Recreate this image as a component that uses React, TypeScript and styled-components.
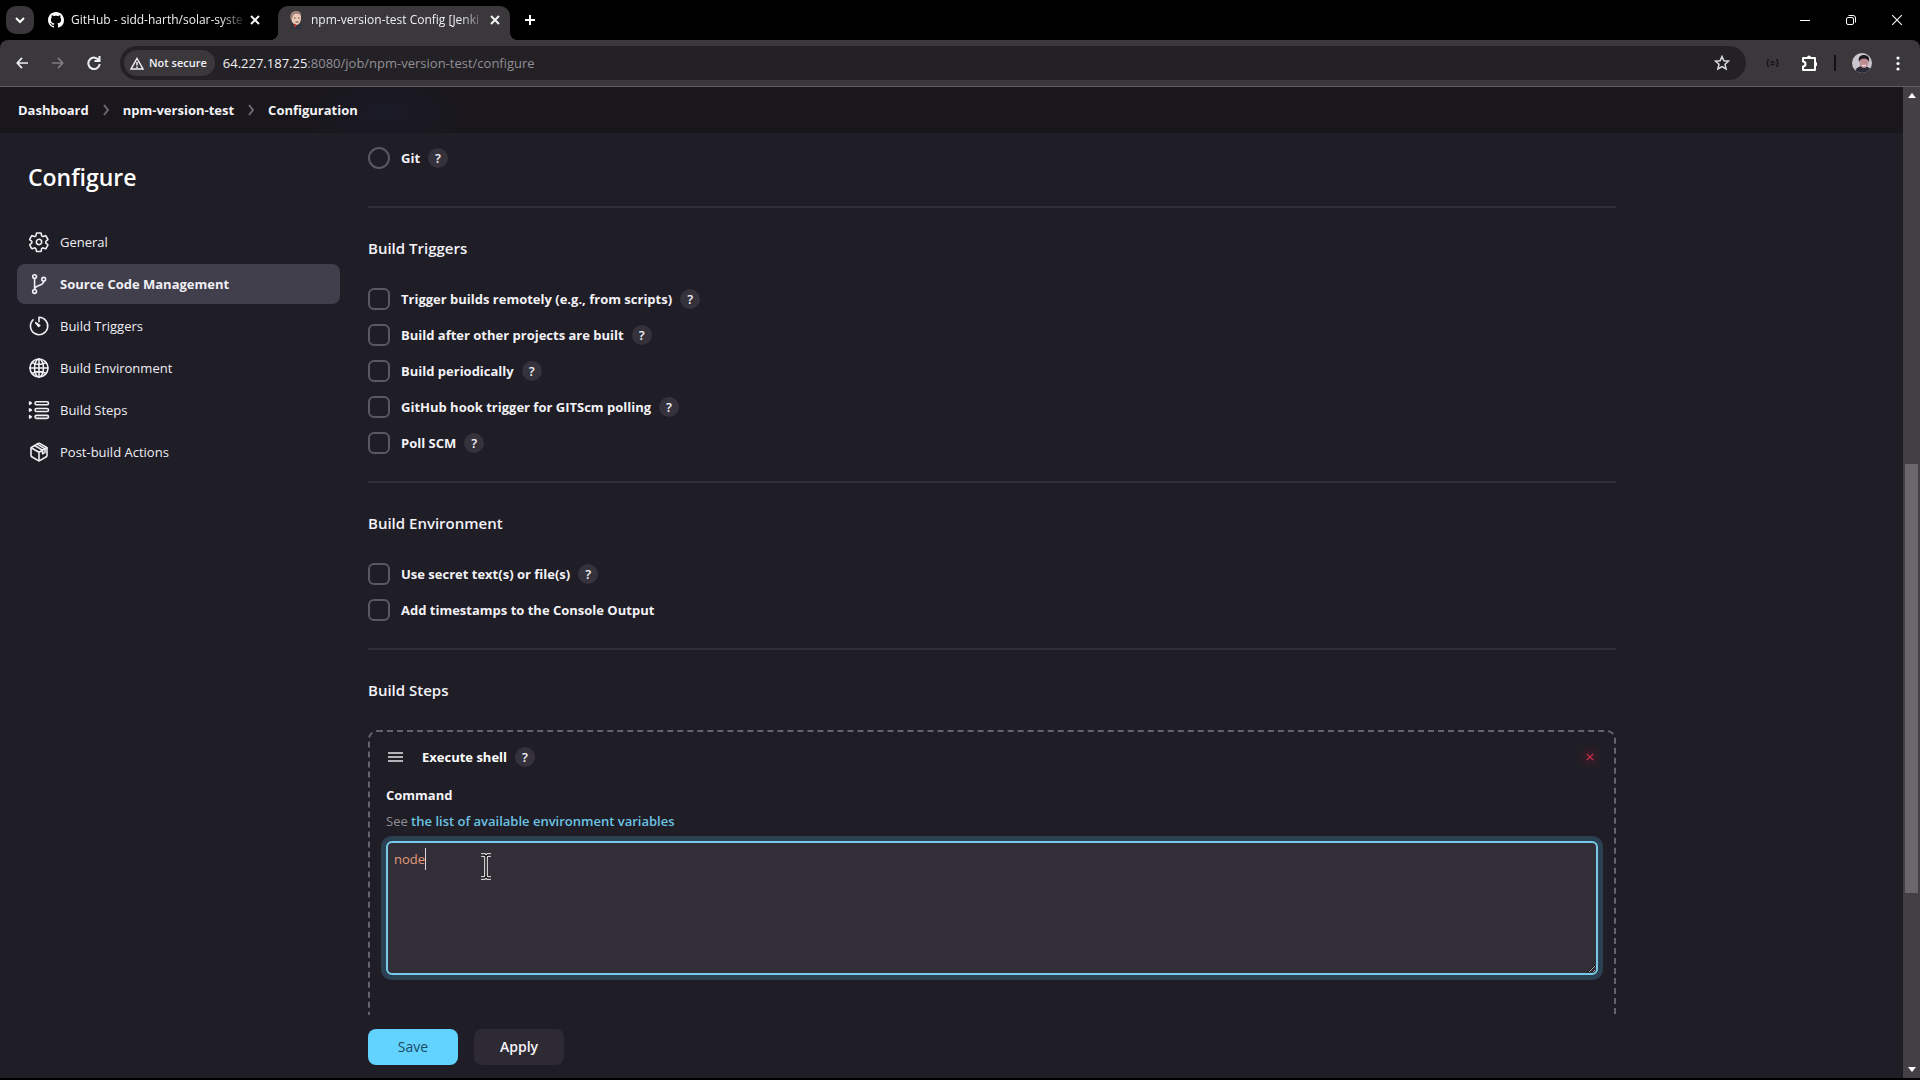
import React from "react";
import styled, { createGlobalStyle, css } from "styled-components";

const Global = createGlobalStyle`
  *, *::before, *::after { box-sizing: border-box; }
  body { margin: 0; background: #000; overflow: hidden; }
  button { border: 0; padding: 0; margin: 0; background: none; color: inherit; font: inherit; cursor: pointer; }
  svg { display: block; flex: none; }
`;

const Window = styled.div`
  height: 100vh;
  display: flex;
  flex-direction: column;
  background: #000;
  padding-bottom: 2px;
  color: #f3f2f7;
  font-family: "Open Sans", "Noto Sans", sans-serif;
  font-size: 13px;
  line-height: 20px;
`;

/* ---------- Browser chrome ---------- */
const TabStrip = styled.div`
  display: flex;
  align-items: stretch;
  height: 40px;
  flex: none;
  padding: 6px 0 0 6px;
`;
const TabSearch = styled.button`
  width: 28px;
  height: 28px;
  border-radius: 10px;
  background: #39373a;
  display: grid;
  place-items: center;
`;
const Tab = styled.div<{ $active?: boolean }>`
  position: relative;
  width: 232px;
  display: flex;
  align-items: center;
  padding: 0 7px 6px 10px;
  margin-left: ${(p) => (p.$active ? 8 : 4)}px;
  border-radius: 10px 10px 0 0;
  background: ${(p) => (p.$active ? "#3a383b" : "transparent")};
  ${(p) =>
    p.$active &&
    css`
      &::before,
      &::after {
        content: "";
        position: absolute;
        bottom: 0;
        width: 8px;
        height: 8px;
      }
      &::before { left: -8px; background: radial-gradient(circle at 0 0, #000 8px, #3a383b 8px); }
      &::after { right: -8px; background: radial-gradient(circle at 100% 0, #000 8px, #3a383b 8px); }
    `}
`;
const TabTitle = styled.span`
  flex: 1;
  min-width: 0;
  margin-left: 7px;
  white-space: nowrap;
  font-size: 12px;
  line-height: 18px;
  color: #f0eff2;
  mask-image: linear-gradient(to right, #000 85%, transparent);
`;
const Glyph = styled.button`
  width: 16px;
  height: 16px;
  flex: none;
  display: grid;
  place-items: center;
  color: #f2f2f2;
`;
const NewTab = styled(Glyph)`
  height: 28px;
  margin-left: 12px;
`;
const WindowButtons = styled.div`
  margin-left: auto;
  display: flex;
  height: 28px;
`;
const WinButton = styled.button`
  width: 46px;
  display: grid;
  place-items: center;
`;
const Toolbar = styled.div`
  flex: none;
  height: 47px;
  display: flex;
  align-items: center;
  background: #3a383b;
  border-bottom: 1px solid #605e61;
  border-radius: 8px 8px 0 0;
  padding: 0 5px 0 4px;
`;
const NavButton = styled.button<{ $dim?: boolean }>`
  width: 36px;
  height: 36px;
  display: grid;
  place-items: center;
  color: ${(p) => (p.$dim ? "#7d7b7f" : "#efeef0")};
`;
const Omnibox = styled.div`
  flex: 1;
  height: 34px;
  margin-left: 8px;
  padding: 0 16px 0 4px;
  display: flex;
  align-items: center;
  border-radius: 17px;
  background: #232126;
`;
const Chip = styled.button`
  height: 26px;
  padding: 0 8px 0 6px;
  display: flex;
  align-items: center;
  gap: 5px;
  border-radius: 13px;
  background: #3a383b;
  font-size: 11px;
  line-height: 18px;
  font-weight: 600;
  white-space: nowrap;
`;
const Url = styled.span`
  flex: 1;
  margin-left: 8px;
  color: #918f94;
  & b { font-weight: 400; color: #f2f1f4; }
`;
const Extensions = styled.div`
  display: flex;
  align-items: center;
  padding-left: 14px;
`;
const ExtButton = styled.button<{ $w: number }>`
  width: ${(p) => p.$w}px;
  height: 28px;
  display: grid;
  place-items: center;
`;
const Rule = styled.span`
  width: 2px;
  height: 16px;
  margin-right: 7px;
  background: #111;
`;

/* ---------- Page ---------- */
const Viewport = styled.div`
  flex: 1;
  min-height: 0;
  display: flex;
`;
const Page = styled.div`
  flex: 1;
  min-width: 0;
  display: flex;
  flex-direction: column;
  background: #1f1d25;
`;
const Scrollbar = styled.div`
  width: 17px;
  flex: none;
  display: flex;
  flex-direction: column;
  align-items: center;
  justify-content: space-between;
  padding: 6px 0;
  background: #424042;
`;
const Thumb = styled.div`
  width: 13px;
  flex: 430;
  background: #696769;
`;
const Gap = styled.div<{ $grow: number }>`
  flex: ${(p) => p.$grow};
`;
const Crumbs = styled.nav`
  flex: none;
  height: 46px;
  display: flex;
  align-items: center;
  gap: 14px;
  padding: 0 18px;
  background: radial-gradient(ellipse 80px 40px at 385px 26px, #1a1a27, #19171c);
  font-weight: 700;
  & a { color: #f3f2f7; text-decoration: none; }
`;
const Columns = styled.div`
  flex: 1;
  min-height: 0;
  display: flex;
  overflow: hidden;
`;
const Side = styled.aside`
  width: 340px;
  flex: none;
  padding: 26px 0 0 17px;
`;
const Title = styled.h1`
  margin: 0 0 27px;
  padding-left: 11px;
  font-size: 23px;
  line-height: 36px;
  font-weight: 600;
  color: #fff;
`;
const Tasks = styled.nav`
  display: flex;
  flex-direction: column;
  gap: 2px;
`;
const Task = styled.a<{ $active?: boolean }>`
  height: 40px;
  display: flex;
  align-items: center;
  gap: 11px;
  padding-left: 12px;
  border-radius: 8px;
  color: #f0eff5;
  text-decoration: none;
  font-weight: ${(p) => (p.$active ? 700 : 400)};
  background: ${(p) => (p.$active ? "#423f4c" : "transparent")};
`;
const Main = styled.main`
  flex: 1;
  min-width: 0;
  display: flex;
  flex-direction: column;
  margin-left: 28px;
  margin-right: 287px;
`;
const Form = styled.form`
  flex: 1;
  min-height: 0;
  overflow: hidden;
  padding-top: 14px;
`;
const Section = styled.section`
  padding-bottom: 27px;
  margin-bottom: 28px;
  border-bottom: 2px solid #322f3a;
`;
const ScmSection = styled(Section)`
  padding-bottom: 37px;
`;
const Heading = styled.h2`
  margin: 0 0 28px;
  font-size: 15px;
  line-height: 24px;
  font-weight: 600;
`;
const Options = styled.div`
  display: flex;
  flex-direction: column;
  gap: 14px;
`;
const Option = styled.div`
  display: flex;
  align-items: center;
  height: 22px;
`;
const Check = styled.input`
  appearance: none;
  flex: none;
  width: 22px;
  height: 22px;
  margin: 0;
  border: 2px solid #5b5862;
  border-radius: ${(p) => (p.type === "radio" ? "50%" : "6px")};
  background: #1f1d25;
`;
const OptionLabel = styled.label`
  padding: 0 8px 0 11px;
  font-weight: 700;
`;
const Help = styled.button`
  width: 20px;
  height: 20px;
  border-radius: 50%;
  background: #35323c;
  line-height: 20px;
  font-weight: 600;
  text-align: center;
`;
const Step = styled.div`
  height: 340px;
  padding: 14px 16px;
  border: 2px dashed #66636c;
  border-radius: 9px;
`;
const StepHead = styled.div`
  display: flex;
  align-items: center;
  height: 22px;
  padding: 0 0 0 2px;
`;
const StepName = styled.span`
  padding: 0 8px 0 19px;
  font-weight: 700;
  color: #fff;
`;
const Remove = styled.button`
  width: 24px;
  height: 24px;
  margin-left: auto;
  margin-right: -4px;
  display: grid;
  place-items: center;
  border-radius: 8px;
  color: #d6304c;
  background: radial-gradient(circle, #3a1c28, #1f1d25 75%);
`;
const FieldLabel = styled.label`
  display: block;
  margin-top: 16px;
  line-height: 22px;
  font-weight: 700;
`;
const Hint = styled.p`
  margin: 5px 0 10px;
  line-height: 20px;
  color: #918f96;
  & a { color: #6cc4e4; font-weight: 600; text-decoration: none; }
`;
const Editor = styled.div`
  position: relative;
`;
const Command = styled.textarea`
  display: block;
  width: 100%;
  height: 134px;
  padding: 6px;
  border: 2px solid #78c9e8;
  border-radius: 6px;
  outline: 0;
  box-shadow: 0 0 0 5px #294150;
  background: #322e38;
  color: #e39a7c;
  font: inherit;
  line-height: 20px;
  resize: vertical;
`;
const Caret = styled.span`
  position: absolute;
  left: 39px;
  top: 7px;
  width: 1px;
  height: 22px;
  background: #d8d8dc;
`;
const Pointer = styled.svg`
  position: absolute;
  left: 94px;
  top: 12px;
`;
const Footer = styled.div`
  flex: none;
  height: 63px;
  display: flex;
  gap: 16px;
  padding-top: 14px;
`;
const Action = styled.button<{ $primary?: boolean }>`
  width: 90px;
  height: 36px;
  border-radius: 8px;
  font-size: 14px;
  font-weight: ${(p) => (p.$primary ? 400 : 600)};
  color: ${(p) => (p.$primary ? "#1d4a63" : "#f5f4f8")};
  background: ${(p) => (p.$primary ? "#62d3ff" : "#2d2a34")};
`;

const Cross = ({ size = 10, w = 2 }: { size?: number; w?: number }) => (
  <svg width={size} height={size} viewBox="0 0 10 10" stroke="currentColor" strokeWidth={w} fill="none">
    <path d="M1 1l8 8M9 1l-8 8" />
  </svg>
);
const Chevron = () => (
  <svg width="6" height="12" viewBox="0 0 6 12" fill="none" stroke="#6e6b75" strokeWidth="2">
    <path d="M1 1l4 5-4 5" />
  </svg>
);
const Line = ({ children }: { children: React.ReactNode }) => (
  <svg width="20" height="20" viewBox="16 16 480 480" overflow="visible" fill="none" stroke="currentColor" strokeWidth="38" strokeLinecap="round" strokeLinejoin="round">
    {children}
  </svg>
);

const icons = {
  gear: (
    <Line>
      <path d="M262 192a64 64 0 1 0 58 58 64 64 0 0 0-58-58zm157 64a167 167 0 0 1-2 23l49 39a12 12 0 0 1 3 15l-47 80a12 12 0 0 1-14 5l-49-20a14 14 0 0 0-13 1 185 185 0 0 1-21 12 14 14 0 0 0-8 11l-7 52a12 12 0 0 1-12 10h-94a12 12 0 0 1-11-10l-8-52a14 14 0 0 0-8-11 172 172 0 0 1-20-12 14 14 0 0 0-13-1l-50 20a12 12 0 0 1-14-6l-46-80a12 12 0 0 1 3-15l42-33a14 14 0 0 0 5-12 165 165 0 0 1 0-24 14 14 0 0 0-5-11l-42-33a12 12 0 0 1-3-15l46-80a12 12 0 0 1 14-5l50 20a14 14 0 0 0 13-1 185 185 0 0 1 20-12 14 14 0 0 0 8-11l8-52a12 12 0 0 1 11-10h94a12 12 0 0 1 11 10l8 52a14 14 0 0 0 8 11 172 172 0 0 1 20 12 14 14 0 0 0 13 1l50-20a12 12 0 0 1 14 6l46 80a12 12 0 0 1-3 15l-42 33a14 14 0 0 0-5 12c0 4 1 8 1 12z" />
    </Line>
  ),
  branch: (
    <Line>
      <circle cx="150" cy="78" r="46" />
      <circle cx="150" cy="434" r="46" />
      <circle cx="368" cy="142" r="46" />
      <path d="M150 126v260M368 190c0 128-218 76-218 196" />
    </Line>
  ),
  timer: (
    <Line>
      <path d="M113 108A208 208 0 1 0 256 48v106" />
      <path d="M176 176l72 92 26-26z" fill="currentColor" />
    </Line>
  ),
  globe: (
    <Line>
      <circle cx="256" cy="256" r="216" />
      <ellipse cx="256" cy="256" rx="108" ry="216" />
      <path d="M256 40v432M40 256h432M90 128c96 56 236 56 332 0M90 384c96-56 236-56 332 0" />
    </Line>
  ),
  steps: (
    <Line>
      <rect x="160" y="56" width="324" height="72" rx="36" />
      <rect x="160" y="220" width="324" height="72" rx="36" />
      <rect x="160" y="384" width="324" height="72" rx="36" />
      <path d="M30 64v56l44-28zM30 228v56l44-28zM30 392v56l44-28z" />
    </Line>
  ),
  box: (
    <Line>
      <path d="M448 342V170a32 32 0 0 0-16-28L272 49a32 32 0 0 0-32 0L80 142a32 32 0 0 0-16 28v172a32 32 0 0 0 16 28l160 93a32 32 0 0 0 32 0l160-93a32 32 0 0 0 16-28z" />
      <path d="M69 153l187 110 187-110M256 463V263M150 100l190 112v88l60-36v-84L212 68" />
    </Line>
  ),
};

const tasks: { icon: keyof typeof icons; label: string; active?: boolean }[] = [
  { icon: "gear", label: "General" },
  { icon: "branch", label: "Source Code Management", active: true },
  { icon: "timer", label: "Build Triggers" },
  { icon: "globe", label: "Build Environment" },
  { icon: "steps", label: "Build Steps" },
  { icon: "box", label: "Post-build Actions" },
];
const triggers = [
  "Trigger builds remotely (e.g., from scripts)",
  "Build after other projects are built",
  "Build periodically",
  "GitHub hook trigger for GITScm polling",
  "Poll SCM",
];

const HelpButton = ({ topic }: { topic: string }) => (
  <Help type="button" title={`Help for feature: ${topic}`}>?</Help>
);
const Choice = ({ id, label, type = "checkbox", help = true }: { id: string; label: string; type?: string; help?: boolean }) => (
  <Option>
    <Check type={type} id={id} />
    <OptionLabel htmlFor={id}>{label}</OptionLabel>
    {help && <HelpButton topic={label} />}
  </Option>
);

const BrowserTabs = () => (
  <TabStrip>
    <TabSearch aria-label="Search tabs">
      <svg width="10" height="8" viewBox="0 0 10 8" fill="none" stroke="#fff" strokeWidth="2"><path d="M1 2l4 4 4-4" /></svg>
    </TabSearch>
    <Tab>
      <svg width="16" height="16" viewBox="0 0 16 16" fill="#fff">
        <path d="M8 0C3.58 0 0 3.58 0 8c0 3.54 2.29 6.53 5.47 7.59.4.07.55-.17.55-.38 0-.19-.01-.82-.01-1.49-2.01.37-2.53-.49-2.69-.94-.09-.23-.48-.94-.82-1.13-.28-.15-.68-.52-.01-.53.63-.01 1.08.58 1.23.82.72 1.21 1.87.87 2.33.66.07-.52.28-.87.51-1.07-1.78-.2-3.64-.89-3.64-3.95 0-.87.31-1.59.82-2.15-.08-.2-.36-1.02.08-2.12 0 0 .67-.21 2.2.82.64-.18 1.32-.27 2-.27s1.36.09 2 .27c1.53-1.04 2.2-.82 2.2-.82.44 1.1.16 1.92.08 2.12.51.56.82 1.27.82 2.15 0 3.07-1.87 3.75-3.65 3.95.29.25.54.73.54 1.48 0 1.07-.01 1.93-.01 2.2 0 .21.15.46.55.38A8.01 8.01 0 0 0 16 8c0-4.42-3.58-8-8-8z" />
      </svg>
      <TabTitle>GitHub - sidd-harth/solar-syste</TabTitle>
      <Glyph aria-label="Close tab"><Cross /></Glyph>
    </Tab>
    <Tab $active>
      <svg width="16" height="18" viewBox="0 0 16 18">
        <path d="M3 13l5-1 5 2 1 4H3z" fill="#2c3440" />
        <path d="M3 6c0-4 2-5.500 5-5.500S13 2 13 6.500 11 14 8.500 14 3 11 3 6z" fill="#eccbb8" />
        <path d="M2.500 8C1.500 3 4 0 8 0s5.500 2 5 5C11 2.500 7 2 5.500 4S4 9 3.500 10z" fill="#a08278" />
        <path d="M6 12.500l3 1.500-3 3z" fill="#c23430" />
        <path d="M6 7h1.500M10 7h1.500M7.500 11h3" stroke="#5b3a34" />
      </svg>
      <TabTitle>npm-version-test Config [Jenki</TabTitle>
      <Glyph aria-label="Close tab"><Cross /></Glyph>
    </Tab>
    <NewTab aria-label="New tab">
      <svg width="10" height="10" viewBox="0 0 10 10" stroke="#fff" strokeWidth="2"><path d="M5 0v10M0 5h10" /></svg>
    </NewTab>
    <WindowButtons>
      <WinButton aria-label="Minimize"><svg width="10" height="10" stroke="#fff"><path d="M0 5.500h10" /></svg></WinButton>
      <WinButton aria-label="Restore">
        <svg width="10" height="10" viewBox="0 0 10 10" fill="none" stroke="#fff"><rect x=".5" y="2.500" width="7" height="7" rx="1.500" /><path d="M2.500 .5H7a2.500 2.500 0 0 1 2.500 2.500v4.500" /></svg>
      </WinButton>
      <WinButton aria-label="Close"><Cross size={12} w={1} /></WinButton>
    </WindowButtons>
  </TabStrip>
);

const AddressBar = () => (
  <Toolbar>
    <NavButton aria-label="Back"><svg width="12" height="12" viewBox="0 0 14 14" fill="none" stroke="currentColor" strokeWidth="2"><path d="M7 1L1.500 7 7 13M1.500 7H14" /></svg></NavButton>
    <NavButton $dim aria-label="Forward"><svg width="12" height="12" viewBox="0 0 14 14" fill="none" stroke="currentColor" strokeWidth="2"><path d="M7 1l5.500 6L7 13M12.500 7H0" /></svg></NavButton>
    <NavButton aria-label="Reload"><svg width="14" height="14" viewBox="0 0 14 14" fill="none" stroke="currentColor" strokeWidth="2"><path d="M12 4.500A5.700 5.700 0 1 0 12.700 8M12.500 0v5H7.500" /></svg></NavButton>
    <Omnibox>
      <Chip>
        <svg width="14" height="13" viewBox="0 0 14 13" fill="none" stroke="currentColor" strokeWidth="1.500"><path d="M7 1.500L13 12H1zM7 5v3.500M7 9.500V11" /></svg>
        Not secure
      </Chip>
      <Url><b>64.227.187.25</b>:8080/job/npm-version-test/configure</Url>
      <Glyph aria-label="Bookmark">
        <svg width="16" height="16" viewBox="0 0 16 16" fill="none" stroke="#dddce0" strokeWidth="1.500"><path d="M8 1.500l1.900 4.300 4.600.4-3.500 3.100 1.100 4.600L8 11.500l-4.100 2.400L5 9.300 1.500 6.200l4.600-.4z" /></svg>
      </Glyph>
    </Omnibox>
    <Extensions>
      <ExtButton $w={24} aria-label="Extension">
        <svg width="13" height="8" viewBox="0 0 13 8" fill="none" stroke="#161518" strokeWidth="1.500"><path d="M3 .5C.5.5 2.500 4 .5 4c2 0 0 3.500 2.500 3.500M10 .5c2.500 0 .5 3.500 2.500 3.500-2 0 0 3.500-2.500 3.500M4.500 3h4M4.500 5.500h4" /></svg>
      </ExtButton>
      <ExtButton $w={50} aria-label="Extensions">
        <svg width="16" height="16" viewBox="0 0 16 16" fill="none" stroke="#fff" strokeWidth="2"><path d="M2 3h12v12H2v-3.500a2.500 2.500 0 0 0 0-5z" strokeLinejoin="round" /><path d="M6 2.500a2 2 0 0 1 4 0zM14.500 7a2 2 0 0 1 0 4z" fill="#fff" stroke="none" /></svg>
      </ExtButton>
      <Rule />
      <ExtButton $w={38} aria-label="Profile">
        <svg width="20" height="20" viewBox="0 0 20 20">
          <clipPath id="face"><circle cx="10" cy="10" r="10" /></clipPath>
          <g clipPath="url(#face)">
            <rect width="20" height="20" fill="#c9c6ce" />
            <path d="M3 20c0-4 3-7 8-7s9 3 9 7z" fill="#2b2a38" />
            <ellipse cx="12" cy="9.500" rx="4.300" ry="5.500" fill="#c08c92" />
            <path d="M7 9c-1-5 1-7 5-7s6 3 5 7c-1-3-3-3.500-5-3.500S8 6 7 9z" fill="#1d1a22" />
            <path d="M10 12c1 1 3 1 4 0" stroke="#fff" fill="none" />
          </g>
        </svg>
      </ExtButton>
      <ExtButton $w={34} aria-label="Menu">
        <svg width="4" height="15" viewBox="0 0 4 15" fill="#fff"><circle cx="2" cy="2" r="1.600" /><circle cx="2" cy="7.500" r="1.600" /><circle cx="2" cy="13" r="1.600" /></svg>
      </ExtButton>
    </Extensions>
  </Toolbar>
);

export default function App() {
  return (
    <Window>
      <Global />
      <BrowserTabs />
      <AddressBar />
      <Viewport>
        <Page>
          <Crumbs aria-label="Breadcrumb">
            <a href="#dashboard">Dashboard</a>
            <Chevron />
            <a href="#job">npm-version-test</a>
            <Chevron />
            <a href="#configure">Configuration</a>
          </Crumbs>
          <Columns>
            <Side>
              <Title>Configure</Title>
              <Tasks aria-label="Sections">
                {tasks.map((t) => (
                  <Task key={t.label} href="#section" $active={t.active}>
                    {icons[t.icon]}
                    {t.label}
                  </Task>
                ))}
              </Tasks>
            </Side>
            <Main>
              <Form>
                <ScmSection>
                  <Choice id="git" type="radio" label="Git" />
                </ScmSection>
                <Section>
                  <Heading>Build Triggers</Heading>
                  <Options>
                    {triggers.map((t, i) => (
                      <Choice key={t} id={`trigger-${i}`} label={t} />
                    ))}
                  </Options>
                </Section>
                <Section>
                  <Heading>Build Environment</Heading>
                  <Options>
                    <Choice id="secrets" label="Use secret text(s) or file(s)" />
                    <Choice id="timestamps" label="Add timestamps to the Console Output" help={false} />
                  </Options>
                </Section>
                <Heading>Build Steps</Heading>
                <Step>
                  <StepHead>
                    <svg width="15" height="10" viewBox="0 0 15 10" stroke="#e4e3e8" strokeWidth="1.500"><path d="M0 1h15M0 5h15M0 9h15" /></svg>
                    <StepName>Execute shell</StepName>
                    <HelpButton topic="Execute shell" />
                    <Remove type="button" aria-label="Delete"><Cross size={8} w={1.5} /></Remove>
                  </StepHead>
                  <FieldLabel htmlFor="command">Command</FieldLabel>
                  <Hint>See <a href="#env">the list of available environment variables</a></Hint>
                  <Editor>
                    <Command id="command" defaultValue="node" spellCheck={false} />
                    <Caret />
                    <Pointer width="12" height="27" viewBox="0 0 12 27" fill="none">
                      <path d="M1 2h3.500L6 3.500 7.500 2H11M6 3v21M1 25h3.500L6 23.500 7.500 25H11" stroke="#fff" strokeWidth="3.500" />
                      <path d="M1 2h3.500L6 3.500 7.500 2H11M6 3v21M1 25h3.500L6 23.500 7.500 25H11" stroke="#000" strokeWidth="1.500" />
                    </Pointer>
                  </Editor>
                </Step>
              </Form>
              <Footer>
                <Action $primary type="button">Save</Action>
                <Action type="button">Apply</Action>
              </Footer>
            </Main>
          </Columns>
        </Page>
        <Scrollbar aria-hidden="true">
          <svg width="8" height="5" viewBox="0 0 8 5" fill="#fff"><path d="M0 5l4-5 4 5z" /></svg>
          <Gap $grow={366} />
          <Thumb />
          <Gap $grow={174} />
          <svg width="8" height="5" viewBox="0 0 8 5" fill="#fff"><path d="M0 0l4 5 4-5z" /></svg>
        </Scrollbar>
      </Viewport>
    </Window>
  );
}
